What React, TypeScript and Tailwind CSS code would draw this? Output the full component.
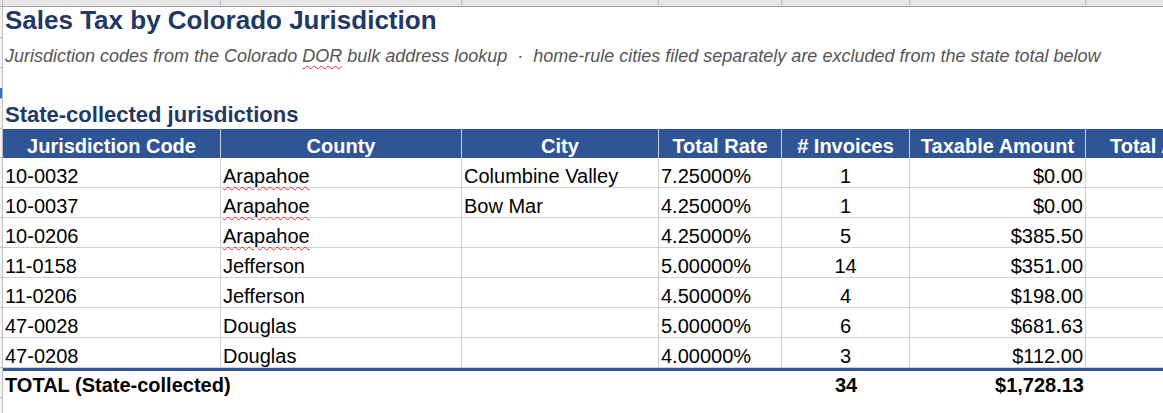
const cols = [
  { key: "code", label: "Jurisdiction Code", w: "w-[218px]", align: "justify-start" },
  { key: "county", label: "County", w: "w-[241px]", align: "justify-start" },
  { key: "city", label: "City", w: "w-[197px]", align: "justify-start" },
  { key: "rate", label: "Total Rate", w: "w-[123px]", align: "justify-start" },
  { key: "inv", label: "# Invoices", w: "w-[128px]", align: "justify-center" },
  { key: "amt", label: "Taxable Amount", w: "w-[176px]", align: "justify-end" },
];

const rows = [
  { code: "10-0032", county: "Arapahoe", city: "Columbine Valley", rate: "7.25000%", inv: "1", amt: "$0.00" },
  { code: "10-0037", county: "Arapahoe", city: "Bow Mar", rate: "4.25000%", inv: "1", amt: "$0.00" },
  { code: "10-0206", county: "Arapahoe", city: "", rate: "4.25000%", inv: "5", amt: "$385.50" },
  { code: "11-0158", county: "Jefferson", city: "", rate: "5.00000%", inv: "14", amt: "$351.00" },
  { code: "11-0206", county: "Jefferson", city: "", rate: "4.50000%", inv: "4", amt: "$198.00" },
  { code: "47-0028", county: "Douglas", city: "", rate: "5.00000%", inv: "6", amt: "$681.63" },
  { code: "47-0208", county: "Douglas", city: "", rate: "4.00000%", inv: "3", amt: "$112.00" },
];

// the clipped row-header strip on the far left
const Strip = ({ children }: { children?: React.ReactNode }) => (
  <div className="w-[3px] shrink-0 border-r border-b border-[#bdbdbd] bg-[#f3f3f3] flex flex-col justify-end">
    {children}
  </div>
);

const Squiggle = ({ text }: { text: string }) => (
  <span className="underline decoration-wavy decoration-[#e0302a] decoration-1 underline-offset-[3px]">
    {text}
  </span>
);

export default function App() {
  return (
    <div className="w-[1163px] h-[413px] overflow-hidden bg-white text-black font-['Liberation_Sans',Arial,sans-serif]">
      {/* column letters band, cut off */}
      <div className="flex h-[7px] bg-[#e6e6e6] border-b border-[#a8a8a8]">
        <div className="w-[3px] shrink-0 border-r border-[#bdbdbd]" />
        {cols.map((c) => (
          <div key={c.key} className={`${c.w} shrink-0 border-r border-[#bdbdbd]`} />
        ))}
        <div className="flex-1" />
      </div>

      {/* title */}
      <div className="flex h-[31px]">
        <Strip />
        <div className="flex-1 flex items-end pl-[2px] pb-[2px]">
          <h1 className="text-[26px] leading-[1.15] font-bold text-[#1f3864] whitespace-nowrap">
            Sales Tax by Colorado Jurisdiction
          </h1>
        </div>
      </div>

      {/* subtitle */}
      <div className="flex h-[30px]">
        <Strip />
        <div className="flex-1 flex items-end pl-[2px] pb-[1px]">
          <p className="text-[18px] leading-[1.15] italic text-[#555555] whitespace-pre">
            Jurisdiction codes from the Colorado <Squiggle text="DOR" /> bulk address lookup
            {"  ·  "}home-rule cities filed separately are excluded from the state total below
          </p>
        </div>
      </div>

      {/* blank row */}
      <div className="flex h-[31px]">
        <Strip>
          <div className="h-[10px] bg-[#2f6fd0]" />
        </Strip>
        <div className="flex-1" />
      </div>

      {/* section heading */}
      <div className="flex h-[30px]">
        <Strip />
        <div className="flex-1 flex items-end pl-[2px] pb-[2px]">
          <h2 className="text-[22px] leading-[1.15] font-bold text-[#1f3864] whitespace-nowrap">
            State-collected jurisdictions
          </h2>
        </div>
      </div>

      {/* table header */}
      <div className="flex h-[29px]">
        <Strip />
        {cols.map((c) => (
          <div
            key={c.key}
            className={`${c.w} shrink-0 flex items-end justify-center pb-[2px] bg-[#2f5597] border-r border-[#c7cfe0] text-white font-bold text-[20px] leading-none whitespace-nowrap`}
          >
            {c.label}
          </div>
        ))}
        <div className="flex-1 flex items-end pl-[24px] pb-[2px] bg-[#2f5597] text-white font-bold text-[20px] leading-none whitespace-nowrap">
          Total Amount Due
        </div>
      </div>

      {/* data rows */}
      {rows.map((r) => (
        <div key={r.code} className="flex h-[30px]">
          <Strip />
          {cols.map((c) => {
            const v = r[c.key as keyof typeof r];
            return (
              <div
                key={c.key}
                className={`${c.w} shrink-0 flex items-end ${c.align} px-[2px] pb-[1px] border-r border-b border-[#d0d0d0] text-[20px] leading-none whitespace-nowrap`}
              >
                {c.key === "county" && v === "Arapahoe" ? <Squiggle text={v} /> : v}
              </div>
            );
          })}
          <div className="flex-1 border-b border-[#d0d0d0]" />
        </div>
      ))}

      {/* thick rule above total */}
      <div className="flex h-[3px]">
        <div className="w-[3px] shrink-0 bg-[#f3f3f3] border-r border-[#bdbdbd]" />
        <div className="flex-1 bg-[#2f5597]" />
      </div>

      {/* total row */}
      <div className="flex h-[27px] font-bold text-[20px] leading-none">
        <Strip />
        <div className="w-[656px] shrink-0 flex items-end pl-[2px] pb-[3px] whitespace-nowrap">
          TOTAL (State-collected)
        </div>
        <div className="w-[123px] shrink-0" />
        <div className="w-[128px] shrink-0 flex items-end justify-center pb-[3px]">34</div>
        <div className="w-[176px] shrink-0 flex items-end justify-end pr-[2px] pb-[3px]">$1,728.13</div>
        <div className="flex-1" />
      </div>

      <div className="flex h-[30px]">
        <Strip />
        <div className="flex-1" />
      </div>
    </div>
  );
}
